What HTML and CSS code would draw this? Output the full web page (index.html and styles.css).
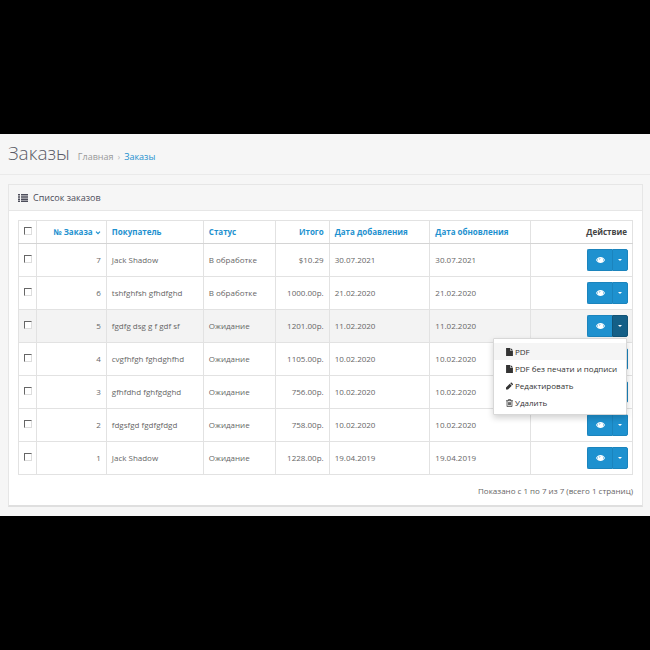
FILE: index.html
```html
<!DOCTYPE html>
<html lang="ru">
<head>
    <meta charset="UTF-8">
    <meta name="viewport" content="width=device-width, initial-scale=1.0">
    <title>Заказы</title>
    <link rel="stylesheet" href="styles.css">
</head>
<body>
    <svg class="sprite" aria-hidden="true">
        <symbol id="i-eye" viewBox="0 0 18 12">
            <path fill="currentColor" fill-rule="evenodd" d="M9 0C5 0 2 2.500 0 6c2 3.500 5 6 9 6s7-2.500 9-6c-2-3.500-5-6-9-6zM1.800 6C2.700 4.500 3.900 3.300 5.300 2.500a4.500 4.500 0 0 0 0 7C3.900 8.700 2.700 7.500 1.800 6zm10.900 3.500a4.500 4.500 0 0 0 0-7c1.400.8 2.600 2 3.500 3.500-.9 1.500-2.100 2.700-3.500 3.500zM9 2.200c.5 0 .5.900 0 .9-1.200 0-2.100.9-2.100 2.100 0 .5-.9.500-.9 0a3 3 0 0 1 3-3z"/>
        </symbol>
        <symbol id="i-file" viewBox="0 0 12 14">
            <path fill="currentColor" d="M0 0h7v5h5v9H0zM8 0l4 4H8z"/>
        </symbol>
        <symbol id="i-pencil" viewBox="0 0 14 14">
            <path fill="currentColor" d="M0 14v-4l7.500-7.500 4 4L4 14zM8.500 1.500L10 0h1l3 3v1l-1.500 1.500z"/>
        </symbol>
        <symbol id="i-trash" viewBox="0 0 12 14">
            <path fill="none" stroke="currentColor" stroke-width="1.300" d="M0 3h12M4 3V1h4v2M1.700 3v10.300h8.600V3M4.200 5.500v5.500M6 5.500v5.500M7.800 5.500v5.500"/>
        </symbol>
    </svg>

    <div class="page">
        <header class="page-header">
            <h1>Заказы</h1>
            <nav class="breadcrumb">
                <a href="#">Главная</a>
                <span class="sep">›</span>
                <a href="#" class="current">Заказы</a>
            </nav>
        </header>

        <main class="panel">
            <div class="panel-heading">
                <svg class="list-icon" viewBox="0 0 10 8" aria-hidden="true">
                    <path fill="currentColor" d="M0 0h2v1.500H0zM3 0h7v1.500H3zM0 2.200h2v1.500H0zM3 2.200h7v1.500H3zM0 4.400h2v1.500H0zM3 4.400h7v1.500H3zM0 6.500h2V8H0zM3 6.500h7V8H3z"/>
                </svg>
                <h2>Список заказов</h2>
            </div>
            <div class="panel-body">
                <table class="orders">
                    <colgroup>
                        <col class="col-check">
                        <col class="col-id">
                        <col class="col-customer">
                        <col class="col-status">
                        <col class="col-total">
                        <col class="col-date">
                        <col class="col-date">
                        <col class="col-action">
                    </colgroup>
                    <thead>
                        <tr>
                            <th><input type="checkbox" aria-label="Выбрать все"></th>
                            <th class="right"><a href="#">№ Заказа <svg class="sort" viewBox="0 0 6 4" aria-hidden="true"><path fill="none" stroke="currentColor" stroke-width="1.200" d="M1 .7l2 2 2-2"/></svg></a></th>
                            <th><a href="#">Покупатель</a></th>
                            <th><a href="#">Статус</a></th>
                            <th class="right"><a href="#">Итого</a></th>
                            <th><a href="#">Дата добавления</a></th>
                            <th><a href="#">Дата обновления</a></th>
                            <th class="right">Действие</th>
                        </tr>
                    </thead>
                    <tbody>
                        <tr>
                            <td><input type="checkbox" aria-label="Заказ 7"></td>
                            <td class="right">7</td>
                            <td>Jack Shadow</td>
                            <td>В обработке</td>
                            <td class="right">$10.29</td>
                            <td>30.07.2021</td>
                            <td>30.07.2021</td>
                            <td class="action"><div class="btn-group"><button class="btn" aria-label="Просмотр"><svg class="eye"><use href="#i-eye"/></svg></button><button class="btn toggle" aria-label="Ещё"><span class="caret"></span></button></div></td>
                        </tr>
                        <tr>
                            <td><input type="checkbox" aria-label="Заказ 6"></td>
                            <td class="right">6</td>
                            <td>tshfghfsh gfhdfghd</td>
                            <td>В обработке</td>
                            <td class="right">1000.00р.</td>
                            <td>21.02.2020</td>
                            <td>21.02.2020</td>
                            <td class="action"><div class="btn-group"><button class="btn" aria-label="Просмотр"><svg class="eye"><use href="#i-eye"/></svg></button><button class="btn toggle" aria-label="Ещё"><span class="caret"></span></button></div></td>
                        </tr>
                        <tr class="active">
                            <td><input type="checkbox" aria-label="Заказ 5"></td>
                            <td class="right">5</td>
                            <td>fgdfg dsg g f gdf sf</td>
                            <td>Ожидание</td>
                            <td class="right">1201.00р.</td>
                            <td>11.02.2020</td>
                            <td>11.02.2020</td>
                            <td class="action">
                                <div class="btn-group">
                                    <button class="btn" aria-label="Просмотр"><svg class="eye"><use href="#i-eye"/></svg></button><button class="btn toggle open" aria-label="Ещё" aria-expanded="true"><span class="caret"></span></button>
                                    <ul class="dropdown">
                                        <li><a href="#" class="hover"><svg><use href="#i-file"/></svg>PDF</a></li>
                                        <li><a href="#"><svg><use href="#i-file"/></svg>PDF без печати и подписи</a></li>
                                        <li><a href="#"><svg><use href="#i-pencil"/></svg>Редактировать</a></li>
                                        <li><a href="#"><svg><use href="#i-trash"/></svg>Удалить</a></li>
                                    </ul>
                                </div>
                            </td>
                        </tr>
                        <tr>
                            <td><input type="checkbox" aria-label="Заказ 4"></td>
                            <td class="right">4</td>
                            <td>cvgfhfgh fghdghfhd</td>
                            <td>Ожидание</td>
                            <td class="right">1105.00р.</td>
                            <td>10.02.2020</td>
                            <td>10.02.2020</td>
                            <td class="action"><div class="btn-group"><button class="btn" aria-label="Просмотр"><svg class="eye"><use href="#i-eye"/></svg></button><button class="btn toggle" aria-label="Ещё"><span class="caret"></span></button></div></td>
                        </tr>
                        <tr>
                            <td><input type="checkbox" aria-label="Заказ 3"></td>
                            <td class="right">3</td>
                            <td>gfhfdhd fghfgdghd</td>
                            <td>Ожидание</td>
                            <td class="right">756.00р.</td>
                            <td>10.02.2020</td>
                            <td>10.02.2020</td>
                            <td class="action"><div class="btn-group"><button class="btn" aria-label="Просмотр"><svg class="eye"><use href="#i-eye"/></svg></button><button class="btn toggle" aria-label="Ещё"><span class="caret"></span></button></div></td>
                        </tr>
                        <tr>
                            <td><input type="checkbox" aria-label="Заказ 2"></td>
                            <td class="right">2</td>
                            <td>fdgsfgd fgdfgfdgd</td>
                            <td>Ожидание</td>
                            <td class="right">758.00р.</td>
                            <td>10.02.2020</td>
                            <td>10.02.2020</td>
                            <td class="action"><div class="btn-group"><button class="btn" aria-label="Просмотр"><svg class="eye"><use href="#i-eye"/></svg></button><button class="btn toggle" aria-label="Ещё"><span class="caret"></span></button></div></td>
                        </tr>
                        <tr>
                            <td><input type="checkbox" aria-label="Заказ 1"></td>
                            <td class="right">1</td>
                            <td>Jack Shadow</td>
                            <td>Ожидание</td>
                            <td class="right">1228.00р.</td>
                            <td>19.04.2019</td>
                            <td>19.04.2019</td>
                            <td class="action"><div class="btn-group"><button class="btn" aria-label="Просмотр"><svg class="eye"><use href="#i-eye"/></svg></button><button class="btn toggle" aria-label="Ещё"><span class="caret"></span></button></div></td>
                        </tr>
                    </tbody>
                </table>
                <p class="results">Показано с 1 по 7 из 7 (всего 1 страниц)</p>
            </div>
        </main>
    </div>
</body>
</html>
```

FILE: styles.css
```css
* {
    box-sizing: border-box;
}
body {
    margin: 0;
    min-height: 100vh;
    display: flex;
    flex-direction: column;
    justify-content: center;
    background: #000;
    color: #666;
    font-family: "Open Sans", "Noto Sans", sans-serif;
    font-size: 8px;
    line-height: 12px;
}
a {
    color: #1e91cf;
    text-decoration: none;
}
.sprite {
    display: none;
}
.page {
    background: #f6f6f6;
    padding-bottom: 9px;
}
.page-header {
    display: flex;
    align-items: baseline;
    gap: 8px;
    padding: 6px 8px 7px;
    border-bottom: 1px solid #eaeaea;
}
h1 {
    margin: 0;
    font-size: 19px;
    font-weight: 300;
    line-height: 27px;
    color: #5a5b66;
}
.breadcrumb {
    display: flex;
    gap: 4px;
    font-size: 9px;
}
.breadcrumb a {
    color: #999;
}
.breadcrumb .sep {
    color: #bbb;
}
.breadcrumb .current {
    color: #1e91cf;
}
.panel {
    margin: 9px 7px 0 8px;
    background: #fff;
    border: 1px solid #e6e6e6;
    border-bottom: 2px solid #dfdfdf;
}
.panel-heading {
    display: flex;
    align-items: center;
    gap: 5px;
    padding: 6px 9px;
    background: #f6f6f6;
    border-bottom: 1px solid #e6e6e6;
    color: #4c4d5a;
}
.panel-heading h2 {
    margin: 0;
    font-size: 9px;
    font-weight: 400;
    line-height: 13px;
}
.list-icon {
    width: 10px;
    height: 8px;
}
.panel-body {
    padding: 9px 9px 8px;
}

/* таблица заказов */
.orders {
    width: 100%;
    table-layout: fixed;
    border-collapse: collapse;
}
.col-check { width: 3%; }
.col-id { width: 11.3%; }
.col-customer { width: 15.8%; }
.col-status { width: 11.7%; }
.col-total { width: 8.8%; }
.col-date { width: 16.4%; }
.orders th,
.orders td {
    padding: 5px;
    border: 1px solid #e2e2e2;
    text-align: left;
    white-space: nowrap;
}
.orders th {
    border-bottom-color: #d4d4d4;
    color: #444;
    font-weight: 700;
}
.orders .right {
    text-align: right;
}
.orders .action {
    padding-right: 4px;
}
.orders .active {
    background: #f3f3f3;
}
.sort {
    width: 6px;
    height: 4px;
    vertical-align: middle;
}
input[type="checkbox"] {
    appearance: none;
    display: block;
    width: 8px;
    height: 8px;
    margin: 0 0 2px;
    background: #fff;
    border: 1px solid;
    border-color: #666 #ddd #ddd #666;
}

/* кнопки действий */
.btn-group {
    position: relative;
    display: flex;
    justify-content: flex-end;
}
.btn {
    display: flex;
    align-items: center;
    justify-content: center;
    width: 25px;
    height: 22px;
    padding: 0;
    background: #1e91cf;
    border: 1px solid #1b84bd;
    border-right: 0;
    border-radius: 2px 0 0 2px;
    color: #fff;
    cursor: pointer;
}
.btn:hover {
    background: #197bb0;
}
.toggle {
    width: 16px;
    border-right: 1px solid #1b84bd;
    border-radius: 0 2px 2px 0;
}
.toggle.open {
    background: #145f87;
    border-color: #115376;
}
.eye {
    width: 9px;
    height: 6px;
}
.caret {
    border: 2px solid transparent;
    border-top-color: #fff;
    border-bottom: 0;
}
.dropdown {
    position: absolute;
    z-index: 10;
    top: 100%;
    right: 1px;
    width: 134px;
    margin: 1px 0 0;
    padding: 4px 0 3px;
    list-style: none;
    background: #fff;
    border: 1px solid #d8d8d8;
    border-radius: 1px;
    box-shadow: 0 3px 6px rgba(0,0,0,0.18);
}
.dropdown a {
    display: flex;
    align-items: center;
    gap: 2px;
    height: 17px;
    padding-left: 12px;
    color: #333;
}
.dropdown a:hover,
.dropdown .hover {
    background: #f5f5f5;
}
.dropdown svg {
    flex-shrink: 0;
    width: 7px;
    height: 8px;
}
.results {
    margin: 10px 0 0;
    text-align: right;
}
```
